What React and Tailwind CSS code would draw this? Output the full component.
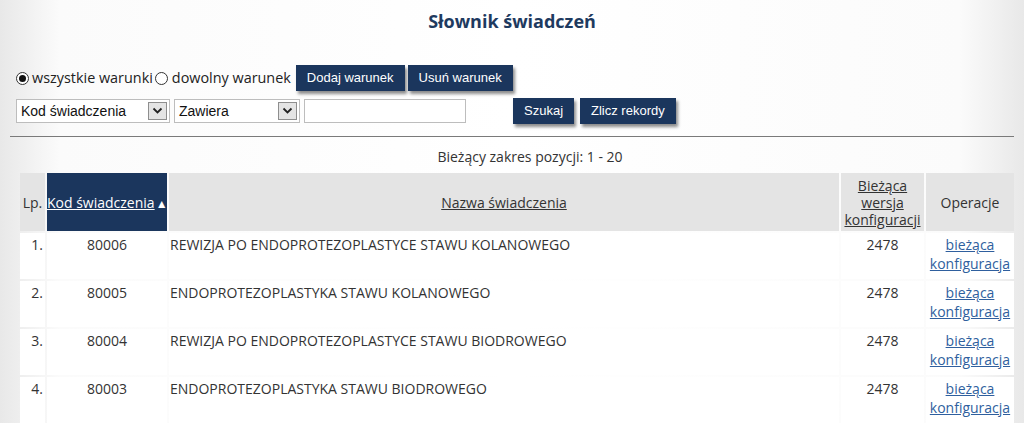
import React from "react";

const rows = [
    { lp: "1.", kod: "80006", nazwa: "REWIZJA PO ENDOPROTEZOPLASTYCE STAWU KOLANOWEGO", wersja: "2478" },
    { lp: "2.", kod: "80005", nazwa: "ENDOPROTEZOPLASTYKA STAWU KOLANOWEGO", wersja: "2478" },
    { lp: "3.", kod: "80004", nazwa: "REWIZJA PO ENDOPROTEZOPLASTYCE STAWU BIODROWEGO", wersja: "2478" },
    { lp: "4.", kod: "80003", nazwa: "ENDOPROTEZOPLASTYKA STAWU BIODROWEGO", wersja: "2478" },
    { lp: "5.", kod: "80002", nazwa: "ENDOPROTEZOPLASTYKA STAWU BIODROWEGO", wersja: "2478" },
];

function NavyButton({ children, className = "" }) {
    return (
        <button
            className={
                "h-[26px] px-[11px] bg-[#1b365d] text-white text-[13px] font-['Liberation_Sans',Arial,sans-serif] shadow-[2px_3px_3px_rgba(0,0,0,0.45)] " +
                className
            }
        >
            {children}
        </button>
    );
}

function FakeSelect({ value, width }) {
    return (
        <div
            className="h-[24px] border border-[#bdbdbd] bg-white flex items-center justify-between pl-[4px] pr-[2px]"
            style={{ width }}
        >
            <span className="text-[14px] text-[#111] font-['Liberation_Sans',Arial,sans-serif]">{value}</span>
            <span className="w-[19px] h-[18px] border border-[#8e8e8e] bg-[#e4e4e4] flex items-center justify-center">
                <svg width="11" height="8" viewBox="0 0 11 8">
                    <path d="M1.5 1.5 L5.5 5.5 L9.5 1.5" stroke="#222" strokeWidth="1.8" fill="none" />
                </svg>
            </span>
        </div>
    );
}

function Radio({ checked }) {
    return (
        <span className="w-[13px] h-[13px] rounded-full border border-[#333] bg-white flex items-center justify-center">
            {checked && <span className="w-[7px] h-[7px] rounded-full bg-[#111]" />}
        </span>
    );
}

export default function App() {
    return (
        <div className="min-h-screen bg-[linear-gradient(to_right,#e8e8e8_0px,#fbfbfb_60px,#ffffff_50%,#fbfbfb_960px,#e8e8e8_1024px)] font-['Open_Sans',sans-serif] text-[#333]">
            <h1 className="pt-[8px] h-[38px] text-center text-[18px] font-bold text-[#1e3a5f] leading-[26px]">
                Słownik świadczeń
            </h1>

            {/* warunki */}
            <div className="flex items-center mt-[27px] pl-[16px]">
                <Radio checked />
                <span className="ml-[3px] text-[14.4px] text-[#222]">wszystkie warunki</span>
                <span className="ml-[2px]">
                    <Radio />
                </span>
                <span className="ml-[4px] text-[14.4px] text-[#222]">dowolny warunek</span>
                <NavyButton className="ml-[5px]">Dodaj warunek</NavyButton>
                <NavyButton className="ml-[3px]">Usuń warunek</NavyButton>
            </div>

            <div className="flex items-center mt-[7px] pl-[16px]">
                <FakeSelect value="Kod świadczenia" width={154} />
                <span className="ml-[4px]">
                    <FakeSelect value="Zawiera" width={126} />
                </span>
                <div className="ml-[4px] w-[162px] h-[24px] border border-[#bdbdbd] bg-white" />
                <NavyButton className="ml-[47px]">Szukaj</NavyButton>
                <NavyButton className="ml-[6px]">Zlicz rekordy</NavyButton>
            </div>

            <div className="mx-[10px] mt-[12px] border-t-[1.5px] border-[#7a7a7a]" />

            <p className="mt-[10px] text-center text-[14px] leading-[20px] pl-[36px]">Bieżący zakres pozycji: 1 - 20</p>

            <table className="mt-[4px] ml-[18px] w-[998px] table-fixed border-separate border-spacing-[2px] text-[14px]">
                <colgroup>
                    <col className="w-[25px]" />
                    <col className="w-[120px]" />
                    <col />
                    <col className="w-[83px]" />
                    <col className="w-[88px]" />
                </colgroup>
                <thead>
                    <tr className="h-[58px]">
                        <th className="bg-[#e4e4e4] font-normal text-center px-0">Lp.</th>
                        <th className="bg-[#1b365d] font-normal text-white text-center whitespace-nowrap">
                            <span className="underline">Kod świadczenia</span>
                            <span className="text-[12px] ml-[1px]">▲</span>
                        </th>
                        <th className="bg-[#e4e4e4] font-normal text-center">
                            <span className="underline">Nazwa świadczenia</span>
                        </th>
                        <th className="bg-[#e4e4e4] font-normal text-center leading-[17px] py-[3px]">
                            <span className="underline">Bieżąca</span>
                            <br />
                            <span className="underline">wersja</span>
                            <br />
                            <span className="underline">konfiguracji</span>
                        </th>
                        <th className="bg-[#e4e4e4] font-normal text-center">Operacje</th>
                    </tr>
                </thead>
                <tbody>
                    {rows.map((row, index) => (
                        <tr key={index} className="align-top leading-[19px]">
                            <td className="bg-white text-right pr-[2px] pt-[2px] pb-[6px]">{row.lp}</td>
                            <td className="bg-white text-center pt-[2px]">{row.kod}</td>
                            <td className="bg-white pl-[1px] pt-[2px]">{row.nazwa}</td>
                            <td className="bg-white text-center pt-[2px]">{row.wersja}</td>
                            <td className="bg-white text-center pt-[2px] pb-[6px]">
                                <a href="#" className="underline text-[#2f5f9e]">
                                    bieżąca
                                    <br />
                                    konfiguracja
                                </a>
                            </td>
                        </tr>
                    ))}
                </tbody>
            </table>
        </div>
    );
}
